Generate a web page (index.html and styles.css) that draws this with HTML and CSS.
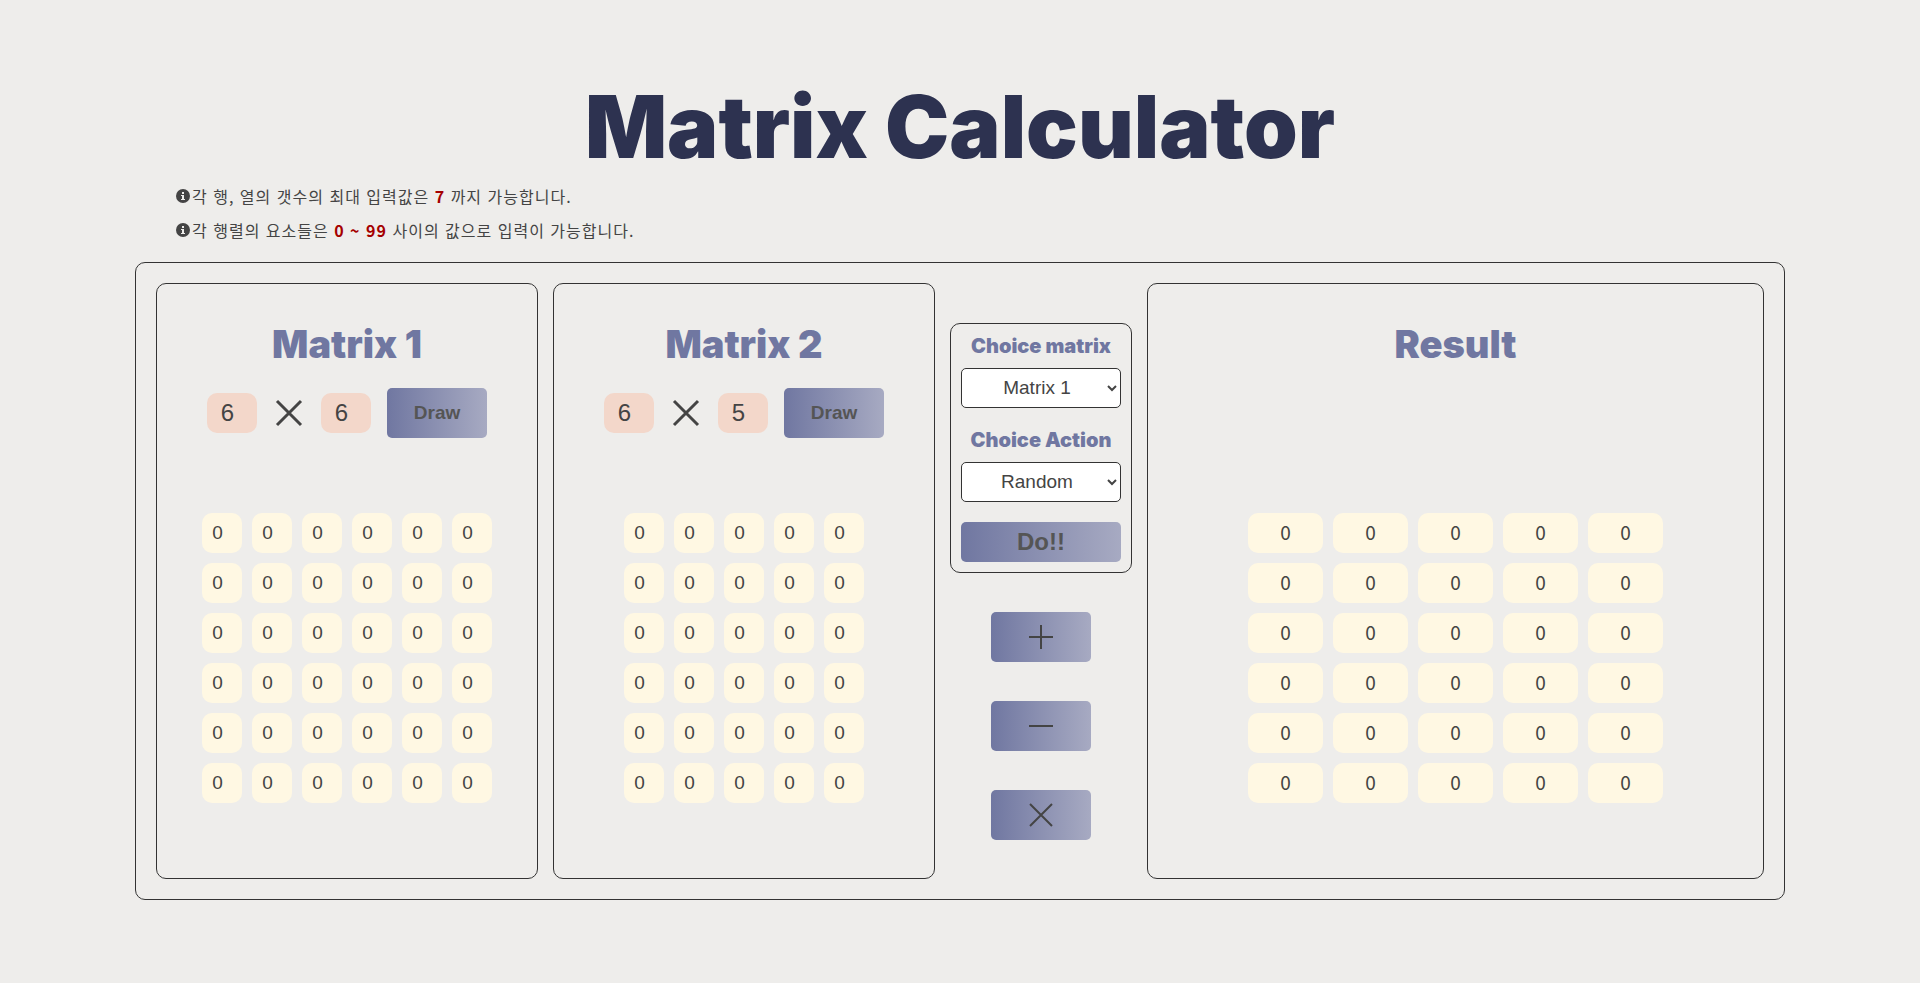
FILE: index.html
```html
<!DOCTYPE html>
<html lang="ko">
<head>
<meta charset="utf-8">
<meta name="viewport" content="width=device-width, initial-scale=1">
<title>Matrix Calculator</title>
<link rel="stylesheet" href="styles.css">
</head>
<body>
<main class="page">
  <h1 class="title">Matrix Calculator</h1>
  <ul class="notes">
    <li class="note"><svg class="note-icon" viewBox="0 0 14 14" aria-hidden="true"><circle cx="7" cy="7" r="7"/><path d="M6 3h2v2H6zM5 6h3v4h1v1H5v-1h1V7H5z"/></svg><span>각 행, 열의 갯수의 최대 입력값은 <strong>7</strong> 까지 가능합니다.</span></li>
    <li class="note"><svg class="note-icon" viewBox="0 0 14 14" aria-hidden="true"><circle cx="7" cy="7" r="7"/><path d="M6 3h2v2H6zM5 6h3v4h1v1H5v-1h1V7H5z"/></svg><span>각 행렬의 요소들은 <strong>0 ~ 99</strong> 사이의 값으로 입력이 가능합니다.</span></li>
  </ul>
  <div class="board">
    <section class="panel">
      <h2 class="heading">Matrix 1</h2>
      <form class="size">
        <input class="size-input" type="number" value="6" min="1" max="7" aria-label="Matrix 1 rows">
        <svg class="times" viewBox="0 0 32 32" aria-hidden="true"><path d="M4 4l24 24M28 4L4 28"/></svg>
        <input class="size-input" type="number" value="6" min="1" max="7" aria-label="Matrix 1 columns">
        <button class="btn" type="button">Draw</button>
      </form>
      <div class="area"><div class="cells cells-6" data-name="Matrix 1" data-rows="6" data-cols="6"></div></div>
    </section>
    <section class="panel">
      <h2 class="heading">Matrix 2</h2>
      <form class="size">
        <input class="size-input" type="number" value="6" min="1" max="7" aria-label="Matrix 2 rows">
        <svg class="times" viewBox="0 0 32 32" aria-hidden="true"><path d="M4 4l24 24M28 4L4 28"/></svg>
        <input class="size-input" type="number" value="5" min="1" max="7" aria-label="Matrix 2 columns">
        <button class="btn" type="button">Draw</button>
      </form>
      <div class="area"><div class="cells cells-5" data-name="Matrix 2" data-rows="6" data-cols="5"></div></div>
    </section>
    <div class="actions">
      <form class="choice">
        <label class="choice-label" for="target">Choice matrix</label>
        <select class="choice-select" id="target"><option>Matrix 1</option><option>Matrix 2</option></select>
        <label class="choice-label" for="action">Choice Action</label>
        <select class="choice-select" id="action"><option>Random</option><option>Reset</option></select>
        <button class="btn btn-do" type="button">Do!!</button>
      </form>
      <button class="btn" type="button" aria-label="Add"><svg class="op" viewBox="0 0 24 24"><path d="M12 0v24M0 12h24"/></svg></button>
      <button class="btn" type="button" aria-label="Subtract"><svg class="op" viewBox="0 0 24 24"><path d="M0 12h24"/></svg></button>
      <button class="btn" type="button" aria-label="Multiply"><svg class="op" viewBox="0 0 24 24"><path d="M1 1l22 22M23 1L1 23"/></svg></button>
    </div>
    <section class="panel">
      <h2 class="heading">Result</h2>
      <div class="size"></div>
      <div class="area">
        <div class="cells cells-result" data-rows="6" data-cols="5"></div>
      </div>
    </section>
  </div>
</main>
<script src="script.js"></script>
</body>
</html>
```
FILE: styles.css
```css
* { box-sizing: border-box; }

body {
  margin: 0;
  background: #eeedeb;
  color: #444;
  font-family: "Noto Sans CJK KR", sans-serif;
}

.page {
  width: 86%;
  max-width: 1650px;
  margin: 0 auto;
  padding: 79px 0;
}

.title {
  margin: 0 0 4px;
  color: #2d3250;
  font: 900 86px/96px Inter, sans-serif;
  text-align: center;
}

.notes {
  margin: 0 0 15px;
  padding: 0 41px;
  list-style: none;
}

.note {
  display: flex;
  align-items: center;
  gap: 2px;
  font-size: 16px;
  line-height: 34px;
  letter-spacing: 1px;
}

.note strong { color: #a50000; }

.note-icon { width: 14px; height: 14px; fill: #444; }
.note-icon path { fill: #eeedeb; }

.board {
  display: grid;
  grid-template-columns: 382fr 382fr 182px 617fr;
  gap: 15px;
  padding: 20px;
  border: 1px solid #333;
  border-radius: 10px;
}

.panel {
  display: flex;
  flex-direction: column;
  align-items: center;
  min-height: 596px;
  padding-top: 40px;
  border: 1px solid #333;
  border-radius: 10px;
}

.heading {
  margin: 0 0 24px;
  color: #7077a1;
  font: 900 38px/40px Inter, sans-serif;
}

.size {
  display: flex;
  align-items: center;
  gap: 16px;
  height: 50px;
}

.size-input,
.cell {
  height: 40px;
  border: 0;
  border-radius: 10px;
  color: #444;
  font-family: "Liberation Sans", Arial, sans-serif;
  text-align: center;
  appearance: textfield;
}

.size-input::-webkit-inner-spin-button,
.cell::-webkit-inner-spin-button {
  display: none;
}

.size-input {
  width: 50px;
  padding: 0 9px 0 0;
  background: #f3d7ca;
  font-size: 24px;
}

.times {
  width: 32px;
  height: 32px;
  stroke: #444;
  stroke-width: 3;
}

.btn {
  display: flex;
  align-items: center;
  justify-content: center;
  width: 100px;
  height: 50px;
  padding: 0;
  border: 0;
  border-radius: 5px;
  background: linear-gradient(90deg, #7077a1, #a7aac2);
  color: #555;
  font: bold 19px "Liberation Sans", Arial, sans-serif;
}

.area {
  display: flex;
  flex: 1;
  align-items: center;
}

.cells { display: grid; gap: 10px; }
.cells-6 { grid-template-columns: repeat(6, 40px); }
.cells-5 { grid-template-columns: repeat(5, 40px); }
.cells-result { grid-template-columns: repeat(5, 75px); }

.cell {
  width: 100%;
  padding: 0 9px 0 0;
  background: #fff8e3;
  font-size: 19px;
}

.result-cell {
  height: 40px;
  border-radius: 10px;
  background: #fff8e3;
  font-size: 19px;
  line-height: 38px;
  text-align: center;
}

.actions {
  display: flex;
  flex-direction: column;
  align-items: center;
  justify-content: center;
  gap: 39px;
}

.choice {
  display: flex;
  flex-direction: column;
  width: 100%;
  padding: 10px;
  border: 1px solid #333;
  border-radius: 10px;
}

.choice-label {
  margin-bottom: 10px;
  color: #7077a1;
  font: 900 20px/24px Inter, sans-serif;
  text-align: center;
  white-space: nowrap;
}

.choice-select {
  height: 40px;
  margin-bottom: 20px;
  padding: 0 0 0 4px;
  border: 1px solid #333;
  border-radius: 5px;
  background: #fff;
  color: #444;
  font: 19px "Liberation Sans", Arial, sans-serif;
  text-align: center;
}

.btn-do {
  width: 100%;
  height: 40px;
  font-size: 24px;
}

.op {
  width: 24px;
  height: 24px;
  stroke: #444;
  stroke-width: 2;
}
```
FILE: script.js
```js
document.querySelectorAll(".cells").forEach((grid) => {
  const rows = Number(grid.dataset.rows);
  const cols = Number(grid.dataset.cols);
  const isResult = grid.classList.contains("cells-result");

  for (let r = 1; r <= rows; r++) {
    for (let c = 1; c <= cols; c++) {
      const cell = document.createElement(isResult ? "div" : "input");
      if (isResult) {
        cell.className = "result-cell";
        cell.textContent = "0";
      } else {
        cell.className = "cell";
        cell.type = "number";
        cell.min = 0;
        cell.max = 99;
        cell.value = 0;
        cell.setAttribute("aria-label", `${grid.dataset.name} row ${r} column ${c}`);
      }
      grid.append(cell);
    }
  }
});
```
